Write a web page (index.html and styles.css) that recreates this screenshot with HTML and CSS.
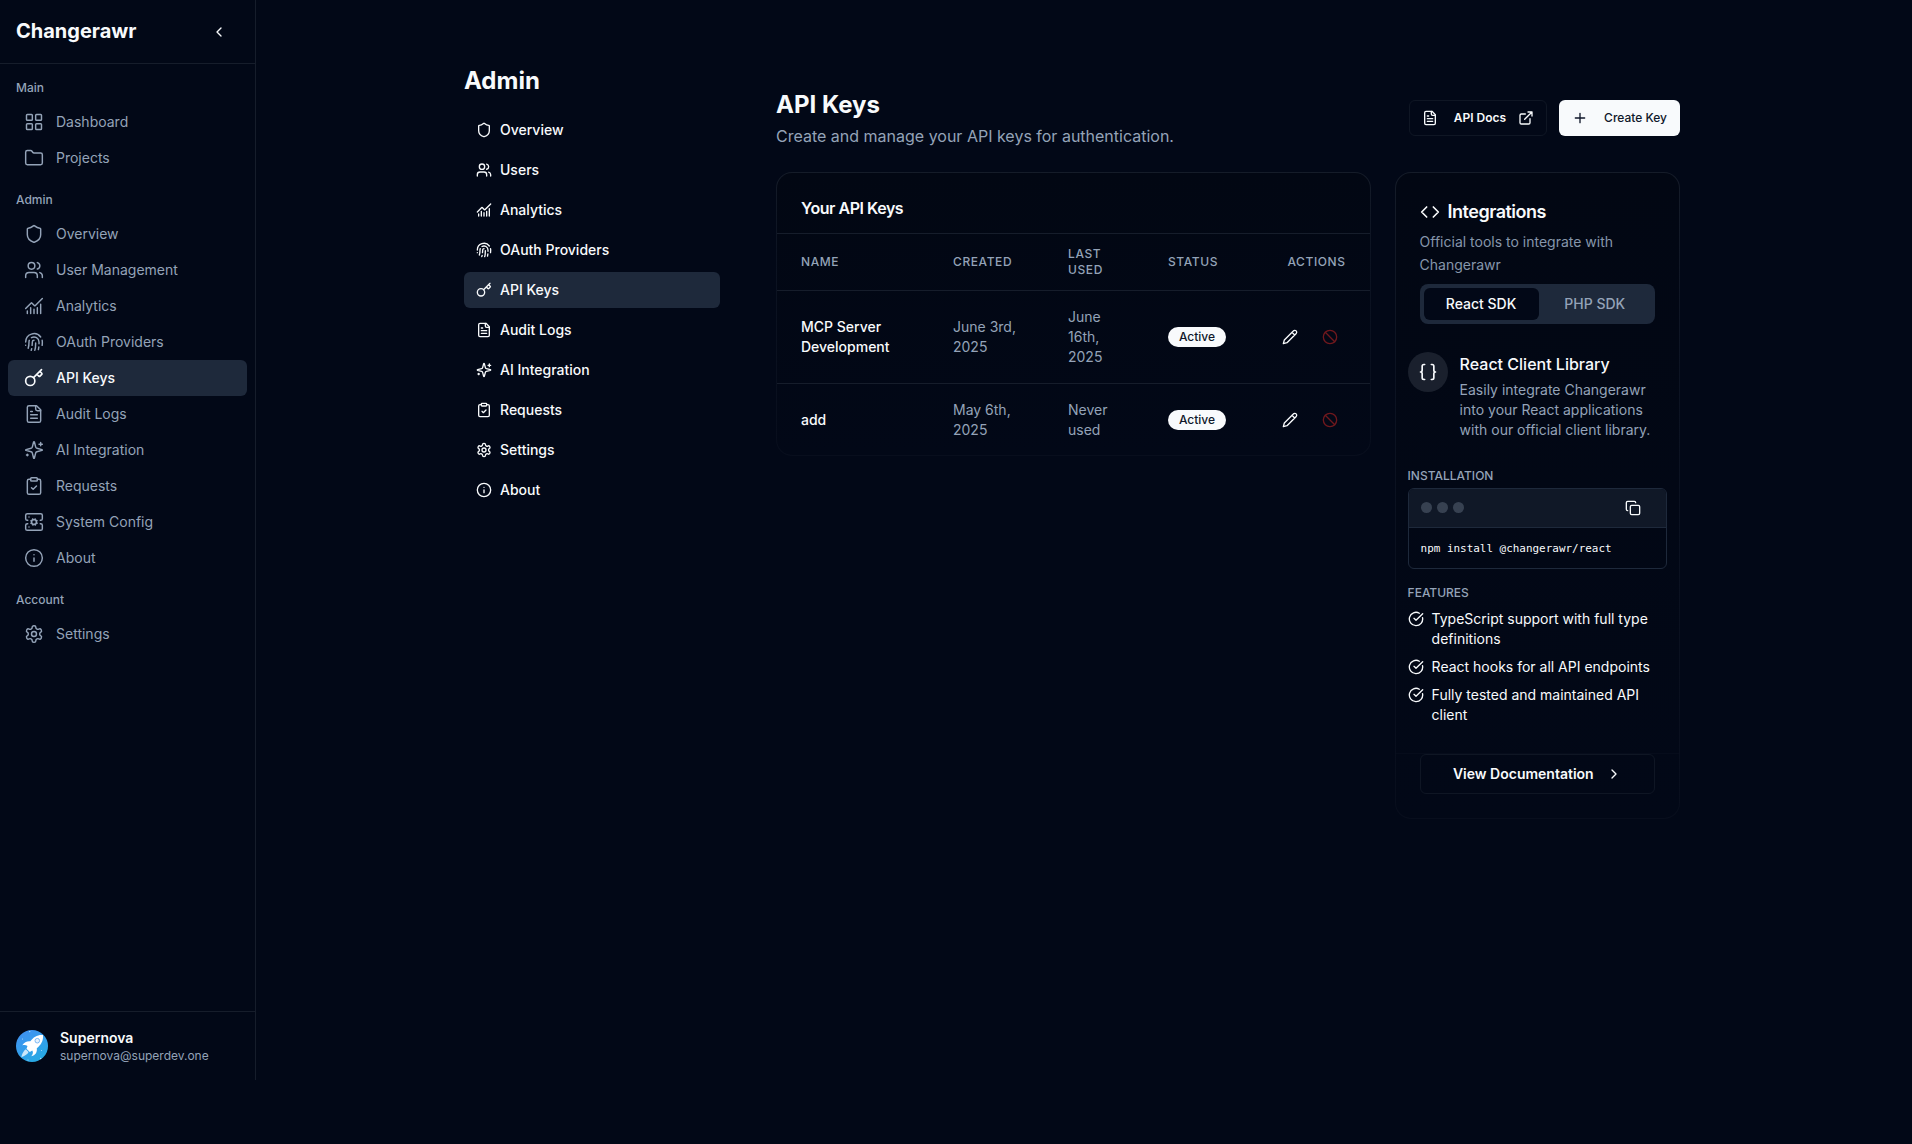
FILE: index.html
```html
<!DOCTYPE html>
<html lang="en">
<head>
<meta charset="utf-8">
<title>Changerawr - API Keys</title>
<link rel="stylesheet" href="styles.css">
</head>
<body>
<svg class="sprite" aria-hidden="true">
  <symbol id="grid" viewBox="0 0 24 24"><rect width="7" height="7" x="3" y="3" rx="1"/><rect width="7" height="7" x="14" y="3" rx="1"/><rect width="7" height="7" x="14" y="14" rx="1"/><rect width="7" height="7" x="3" y="14" rx="1"/></symbol>
  <symbol id="folder" viewBox="0 0 24 24"><path d="M20 20a2 2 0 0 0 2-2V8a2 2 0 0 0-2-2h-7.9a2 2 0 0 1-1.69-.9L9.6 3.9A2 2 0 0 0 7.93 3H4a2 2 0 0 0-2 2v13a2 2 0 0 0 2 2Z"/></symbol>
  <symbol id="shield" viewBox="0 0 24 24"><path d="M20 13c0 5-3.5 7.5-7.66 8.95a1 1 0 0 1-.67-.01C7.5 20.5 4 18 4 13V6a1 1 0 0 1 1-1c2 0 4.5-1.2 6.24-2.72a1.17 1.17 0 0 1 1.52 0C14.51 3.81 17 5 19 5a1 1 0 0 1 1 1z"/></symbol>
  <symbol id="users" viewBox="0 0 24 24"><path d="M16 21v-2a4 4 0 0 0-4-4H6a4 4 0 0 0-4 4v2"/><circle cx="9" cy="7" r="4"/><path d="M22 21v-2a4 4 0 0 0-3-3.87M16 3.13a4 4 0 0 1 0 7.75"/></symbol>
  <symbol id="chart" viewBox="0 0 24 24"><path d="M12 16v5M16 14v7M20 10v11M22 3l-8.646 8.646a.5.5 0 0 1-.708 0L9.354 8.354a.5.5 0 0 0-.707 0L2 15M4 18v3M8 14v7"/></symbol>
  <symbol id="fingerprint" viewBox="0 0 24 24"><path d="M12 10a2 2 0 0 0-2 2c0 1.02-.1 2.51-.26 4M14 13.12c0 2.38 0 6.38-1 8.88M17.29 21.02c.12-.6.43-2.3.5-3.02M2 12a10 10 0 0 1 18-6M2 16h.01M21.8 16c.2-2 .131-5.354 0-6M5 19.5C5.5 18 6 15 6 12a6 6 0 0 1 .34-2M8.65 22c.21-.66.45-1.32.57-2M9 6.8a6 6 0 0 1 9 5.2v2"/></symbol>
  <symbol id="key" viewBox="0 0 24 24"><path d="m15.5 7.5 2.3 2.3a1 1 0 0 0 1.4 0l2.1-2.1a1 1 0 0 0 0-1.4L19 4M21 2l-9.6 9.6"/><circle cx="7.5" cy="15.5" r="5.5"/></symbol>
  <symbol id="file" viewBox="0 0 24 24"><path d="M15 2H6a2 2 0 0 0-2 2v16a2 2 0 0 0 2 2h12a2 2 0 0 0 2-2V7Z"/><path d="M14 2v4a2 2 0 0 0 2 2h4M10 9H8M16 13H8M16 17H8"/></symbol>
  <symbol id="sparkles" viewBox="0 0 24 24"><path d="M9.937 15.5A2 2 0 0 0 8.5 14.063l-6.135-1.582a.5.5 0 0 1 0-.962L8.5 9.936A2 2 0 0 0 9.937 8.5l1.582-6.135a.5.5 0 0 1 .963 0L14.063 8.5A2 2 0 0 0 15.5 9.937l6.135 1.581a.5.5 0 0 1 0 .964L15.5 14.063a2 2 0 0 0-1.437 1.437l-1.582 6.135a.5.5 0 0 1-.963 0z"/><path d="M20 3v4M22 5h-4M4 17v2M5 18H3"/></symbol>
  <symbol id="clipboard" viewBox="0 0 24 24"><rect width="8" height="4" x="8" y="2" rx="1"/><path d="M16 4h2a2 2 0 0 1 2 2v14a2 2 0 0 1-2 2H6a2 2 0 0 1-2-2V6a2 2 0 0 1 2-2h2M9 14l2 2 4-4"/></symbol>
  <symbol id="server" viewBox="0 0 24 24"><circle cx="12" cy="12" r="3"/><path d="M4.5 10H4a2 2 0 0 1-2-2V4a2 2 0 0 1 2-2h16a2 2 0 0 1 2 2v4a2 2 0 0 1-2 2h-.5M4.5 14H4a2 2 0 0 0-2 2v4a2 2 0 0 0 2 2h16a2 2 0 0 0 2-2v-4a2 2 0 0 0-2-2h-.5M6 6h.01M6 18h.01M15.7 13.4l-.9-.3M9.2 10.9l-.9-.3M10.6 15.7l.3-.9M13.6 15.7l-.4-1M10.8 9.3l-.4-1M8.3 13.6l1-.4M14.7 10.8l1-.4M13.4 8.3l-.3.9"/></symbol>
  <symbol id="info" viewBox="0 0 24 24"><circle cx="12" cy="12" r="10"/><path d="M12 16v-4M12 8h.01"/></symbol>
  <symbol id="gear" viewBox="0 0 24 24"><path d="M12.22 2h-.44a2 2 0 0 0-2 2v.18a2 2 0 0 1-1 1.73l-.43.25a2 2 0 0 1-2 0l-.15-.08a2 2 0 0 0-2.73.73l-.22.38a2 2 0 0 0 .73 2.73l.15.1a2 2 0 0 1 1 1.72v.51a2 2 0 0 1-1 1.74l-.15.09a2 2 0 0 0-.73 2.73l.22.38a2 2 0 0 0 2.73.73l.15-.08a2 2 0 0 1 2 0l.43.25a2 2 0 0 1 1 1.73V20a2 2 0 0 0 2 2h.44a2 2 0 0 0 2-2v-.18a2 2 0 0 1 1-1.73l.43-.25a2 2 0 0 1 2 0l.15.08a2 2 0 0 0 2.73-.73l.22-.39a2 2 0 0 0-.73-2.73l-.15-.08a2 2 0 0 1-1-1.74v-.5a2 2 0 0 1 1-1.74l.15-.09a2 2 0 0 0 .73-2.73l-.22-.38a2 2 0 0 0-2.73-.73l-.15.08a2 2 0 0 1-2 0l-.43-.25a2 2 0 0 1-1-1.73V4a2 2 0 0 0-2-2z"/><circle cx="12" cy="12" r="3"/></symbol>
  <symbol id="external" viewBox="0 0 24 24"><path d="M15 3h6v6M10 14 21 3M18 13v6a2 2 0 0 1-2 2H5a2 2 0 0 1-2-2V8a2 2 0 0 1 2-2h6"/></symbol>
  <symbol id="plus" viewBox="0 0 24 24"><path d="M5 12h14M12 5v14"/></symbol>
  <symbol id="code" viewBox="0 0 24 24"><path d="m16 18 6-6-6-6M8 6l-6 6 6 6"/></symbol>
  <symbol id="braces" viewBox="0 0 24 24"><path d="M8 3H7a2 2 0 0 0-2 2v5a2 2 0 0 1-2 2 2 2 0 0 1 2 2v5c0 1.1.9 2 2 2h1M16 21h1a2 2 0 0 0 2-2v-5c0-1.1.9-2 2-2a2 2 0 0 1-2-2V5a2 2 0 0 0-2-2h-1"/></symbol>
  <symbol id="copy" viewBox="0 0 24 24"><rect width="14" height="14" x="8" y="8" rx="2"/><path d="M4 16c-1.1 0-2-.9-2-2V4c0-1.1.9-2 2-2h10c1.1 0 2 .9 2 2"/></symbol>
  <symbol id="check" viewBox="0 0 24 24"><path d="M21.801 10A10 10 0 1 1 17 3.335M9 11l3 3L22 4"/></symbol>
  <symbol id="pencil" viewBox="0 0 24 24"><path d="M17 3a2.850 2.830 0 1 1 4 4L7.500 20.500 2 22l1.500-5.500ZM15 5l4 4"/></symbol>
  <symbol id="ban" viewBox="0 0 24 24"><circle cx="12" cy="12" r="10"/><path d="m4.9 4.9 14.2 14.2"/></symbol>
  <symbol id="left" viewBox="0 0 24 24"><path d="m15 18-6-6 6-6"/></symbol>
  <symbol id="right" viewBox="0 0 24 24"><path d="m9 18 6-6-6-6"/></symbol>
</svg>
<div class="app">
  <aside class="sidebar">
    <header class="brand"><span>Changerawr</span><button class="collapse"><svg class="icon"><use href="#left"/></svg></button></header>
    <nav class="side-nav">
      <section><h3>Main</h3>
        <a class="side-link"><svg class="icon"><use href="#grid"/></svg>Dashboard</a>
        <a class="side-link"><svg class="icon"><use href="#folder"/></svg>Projects</a>
      </section>
      <section><h3>Admin</h3>
        <a class="side-link"><svg class="icon"><use href="#shield"/></svg>Overview</a>
        <a class="side-link"><svg class="icon"><use href="#users"/></svg>User Management</a>
        <a class="side-link"><svg class="icon"><use href="#chart"/></svg>Analytics</a>
        <a class="side-link"><svg class="icon"><use href="#fingerprint"/></svg>OAuth Providers</a>
        <a class="side-link active"><svg class="icon"><use href="#key"/></svg>API Keys</a>
        <a class="side-link"><svg class="icon"><use href="#file"/></svg>Audit Logs</a>
        <a class="side-link"><svg class="icon"><use href="#sparkles"/></svg>AI Integration</a>
        <a class="side-link"><svg class="icon"><use href="#clipboard"/></svg>Requests</a>
        <a class="side-link"><svg class="icon"><use href="#server"/></svg>System Config</a>
        <a class="side-link"><svg class="icon"><use href="#info"/></svg>About</a>
      </section>
      <section><h3>Account</h3>
        <a class="side-link"><svg class="icon"><use href="#gear"/></svg>Settings</a>
      </section>
    </nav>
    <footer class="user">
      <svg class="avatar" viewBox="0 0 32 32">
        <defs><linearGradient id="sky" x1="0" y1="0" x2="0.6" y2="1"><stop offset="0" stop-color="#438ff3"/><stop offset="1" stop-color="#27a9e4"/></linearGradient></defs>
        <circle cx="16" cy="16" r="16" fill="url(#sky)"/>
        <path fill="#fff" d="M27 5C21.500 4.500 17.500 7 14.300 11.300 11 11 8.300 12 6.300 15.300 8.500 14.800 10.200 15.100 11.500 16L10.500 18.800 13.800 22 16.300 20.600C17.200 22 17.300 23.800 15.300 26.200 19.500 25.400 21.300 22.300 20.800 18.300 25 14.800 27.500 11 27 5Z"/>
        <path fill="#fff" opacity=".75" d="M9.800 19.300 12.600 22C11.500 24.500 8.500 26 5.300 27.200 6 24 7.300 21 9.800 19.300Z"/>
        <circle cx="21.300" cy="10.700" r="2.300" fill="#e8f3fe" stroke="#62abf2" stroke-width=".8"/>
        <g fill="#b9e2fb"><circle cx="13.700" cy="1.600" r=".7"/><circle cx="6.500" cy="9" r=".5"/><circle cx="25.500" cy="20.500" r=".5"/><circle cx="24.700" cy="28.500" r=".7"/><circle cx="12" cy="30" r=".6"/></g>
      </svg>
      <div class="who"><strong>Supernova</strong><span>supernova@superdev.one</span></div>
    </footer>
  </aside>

  <div class="page">
    <aside class="admin">
      <h2>Admin</h2>
      <nav class="admin-nav">
        <a class="admin-link"><svg class="icon"><use href="#shield"/></svg>Overview</a>
        <a class="admin-link"><svg class="icon"><use href="#users"/></svg>Users</a>
        <a class="admin-link"><svg class="icon"><use href="#chart"/></svg>Analytics</a>
        <a class="admin-link"><svg class="icon"><use href="#fingerprint"/></svg>OAuth Providers</a>
        <a class="admin-link active"><svg class="icon"><use href="#key"/></svg>API Keys</a>
        <a class="admin-link"><svg class="icon"><use href="#file"/></svg>Audit Logs</a>
        <a class="admin-link"><svg class="icon"><use href="#sparkles"/></svg>AI Integration</a>
        <a class="admin-link"><svg class="icon"><use href="#clipboard"/></svg>Requests</a>
        <a class="admin-link"><svg class="icon"><use href="#gear"/></svg>Settings</a>
        <a class="admin-link"><svg class="icon"><use href="#info"/></svg>About</a>
      </nav>
    </aside>

    <main class="content">
      <header class="head">
        <div><h1>API Keys</h1><p>Create and manage your API keys for authentication.</p></div>
        <div class="head-actions">
          <button class="btn outline docs"><svg class="icon"><use href="#file"/></svg><span>API Docs</span><svg class="icon"><use href="#external"/></svg></button>
          <button class="btn primary"><svg class="icon"><use href="#plus"/></svg><span>Create Key</span></button>
        </div>
      </header>
      <div class="columns">
        <section class="card keys">
          <h3>Your API Keys</h3>
          <table>
            <colgroup><col class="c-name"><col class="c-created"><col class="c-used"><col class="c-status"><col class="c-actions"></colgroup>
            <thead><tr><th>Name</th><th>Created</th><th>Last Used</th><th>Status</th><th class="end">Actions</th></tr></thead>
            <tbody>
              <tr><td class="name">MCP Server Development</td><td>June 3rd, 2025</td><td>June 16th, 2025</td><td><span class="badge">Active</span></td><td><div class="row-actions"><button class="mini"><svg class="icon"><use href="#pencil"/></svg></button><button class="mini danger"><svg class="icon"><use href="#ban"/></svg></button></div></td></tr>
              <tr><td class="name">add</td><td>May 6th, 2025</td><td>Never used</td><td><span class="badge">Active</span></td><td><div class="row-actions"><button class="mini"><svg class="icon"><use href="#pencil"/></svg></button><button class="mini danger"><svg class="icon"><use href="#ban"/></svg></button></div></td></tr>
            </tbody>
          </table>
        </section>

        <section class="card sdk">
          <div class="sdk-head">
            <h3><svg class="icon"><use href="#code"/></svg>Integrations</h3>
            <p>Official tools to integrate with Changerawr</p>
            <div class="tabs"><button class="tab on">React SDK</button><button class="tab">PHP SDK</button></div>
          </div>
          <div class="sdk-body">
            <div class="lib">
              <div class="lib-icon"><svg class="icon"><use href="#braces"/></svg></div>
              <div><h4>React Client Library</h4><p>Easily integrate Changerawr into your React applications with our official client library.</p></div>
            </div>
            <h5>INSTALLATION</h5>
            <div class="terminal">
              <div class="term-bar"><div class="dots"><i></i><i></i><i></i></div><svg class="icon"><use href="#copy"/></svg></div>
              <code>npm install @changerawr/react</code>
            </div>
            <h5 class="feat-title">FEATURES</h5>
            <ul>
              <li><svg class="icon"><use href="#check"/></svg><span>TypeScript support with full type definitions</span></li>
              <li><svg class="icon"><use href="#check"/></svg><span>React hooks for all API endpoints</span></li>
              <li><svg class="icon"><use href="#check"/></svg><span>Fully tested and maintained API client</span></li>
            </ul>
          </div>
          <div class="sdk-foot"><button class="btn outline wide"><span>View Documentation</span><svg class="icon"><use href="#right"/></svg></button></div>
        </section>
      </div>
    </main>
  </div>
</div>
</body>
</html>
```
FILE: styles.css
```css
:root {
  --bg: #020817;
  --fg: #f8fafc;
  --muted: #94a3b8;
  --soft: #8696ab;
  --accent: #1e293b;
  --line: #161d2b;
  --faint: #0f1624;
}
* { box-sizing: border-box; }
body {
  margin: 0;
  height: 1144px;
  overflow: hidden;
  background: var(--bg);
  color: var(--fg);
  font: 400 14px/20px Inter, "Liberation Sans", sans-serif;
}
h1, h2, h3, h4, h5, p, ul { margin: 0; padding: 0; }
button { font: inherit; color: inherit; background: none; border: 0; padding: 0; }
.sprite { display: none; }
.icon {
  display: block;
  flex: none;
  width: 16px;
  height: 16px;
  fill: none;
  stroke: currentColor;
  stroke-width: 2;
  stroke-linecap: round;
  stroke-linejoin: round;
}
.app { display: flex; align-items: flex-start; }

/* Primary sidebar */
.sidebar {
  display: flex;
  flex-direction: column;
  flex: none;
  width: 256px;
  height: 1080px;
  border-right: 1px solid var(--line);
}
.brand {
  display: flex;
  align-items: center;
  justify-content: space-between;
  height: 64px;
  padding: 0 16px;
  border-bottom: 1px solid var(--line);
  font-size: 20px;
  font-weight: 700;
  line-height: 28px;
}
.brand span { padding-bottom: 2px; }
.collapse { display: grid; place-items: center; width: 40px; height: 40px; }
.side-nav { display: flex; flex: 1; flex-direction: column; gap: 16px; padding: 16px 8px; }
.side-nav h3 {
  margin-bottom: 8px;
  padding: 0 8px;
  color: var(--muted);
  font-size: 12px;
  font-weight: 500;
  line-height: 16px;
}
.side-link {
  display: flex;
  align-items: center;
  gap: 12px;
  height: 36px;
  padding: 0 16px;
  border-radius: 6px;
  color: var(--muted);
}
.side-link .icon { width: 20px; height: 20px; stroke-width: 1.75; }
.side-link.active { background: var(--accent); color: var(--fg); font-weight: 500; }
.side-link.active .icon { stroke-width: 2; }
.user {
  display: flex;
  align-items: center;
  gap: 12px;
  padding: 16px;
  border-top: 1px solid var(--line);
}
.avatar { width: 32px; height: 32px; }
.who { display: flex; flex-direction: column; }
.who strong { font-weight: 600; }
.who span { color: var(--muted); font-size: 12px; line-height: 16px; }

/* Page */
.page { display: flex; gap: 56px; width: 1424px; padding: 64px 0 0 208px; }
.admin { flex: none; width: 256px; }
.admin h2 { padding-top: 1px; margin-bottom: 15px; font-size: 24px; font-weight: 700; line-height: 32px; }
.admin-nav { display: flex; flex-direction: column; gap: 4px; }
.admin-link {
  display: flex;
  align-items: center;
  gap: 8px;
  height: 36px;
  padding: 0 12px;
  border-radius: 6px;
  font-weight: 500;
}
.admin-link.active { background: var(--accent); }
.content { flex: 1; padding-top: 24px; }
.head { display: flex; align-items: center; justify-content: space-between; margin-bottom: 24px; }
.head h1 { padding-top: 1px; margin-bottom: 3px; font-size: 24px; font-weight: 700; line-height: 32px; }
.head p { color: var(--muted); font-size: 16px; line-height: 24px; }
.head-actions { display: flex; gap: 12px; }
.btn {
  display: flex;
  align-items: center;
  gap: 16px;
  height: 36px;
  padding: 0 12px;
  border-radius: 6px;
  font-size: 12px;
  font-weight: 500;
  white-space: nowrap;
}
.btn.outline { border: 1px solid var(--faint); font-weight: 600; }
.btn.docs .icon:last-child { margin-left: -4px; }
.btn.primary { padding: 0 13px; background: var(--fg); color: #0f172a; }

.columns { display: grid; grid-template-columns: 594.6px 285.4px; gap: 24px; align-items: start; }
.card {
  border: 1px solid transparent;
  border-radius: 16px;
  background:
    linear-gradient(#020713, #020817) padding-box,
    linear-gradient(#151c29, #0c1322 30%, #080e1d) border-box;
}

/* Keys table */
.keys { overflow: hidden; }
.keys h3 {
  padding: 23px 24px 13px;
  border-bottom: 1px solid var(--line);
  font-size: 16px;
  font-weight: 600;
  line-height: 24px;
  letter-spacing: -.46px;
}
table { width: 100%; table-layout: fixed; border-collapse: separate; border-spacing: 0; }
.c-name { width: 152px; }
.c-created { width: 115px; }
.c-used { width: 100px; }
.c-status { width: 105px; }
th, td { padding: 16px 24px; text-align: left; color: var(--muted); }
th {
  padding-top: 12px;
  padding-bottom: 12px;
  border-bottom: 1px solid var(--line);
  font-size: 12px;
  font-weight: 500;
  line-height: 16px;
  letter-spacing: .6px;
  text-transform: uppercase;
}
th.end { text-align: right; }
td { font-weight: 400; }
tbody tr:first-child td { border-bottom: 1px solid var(--line); }
tbody tr:last-child td { padding-bottom: 15px; }
td.name { color: var(--fg); font-weight: 500; padding-right: 20px; }
.badge {
  display: block;
  width: 58px;
  height: 20px;
  border-radius: 10px;
  background: var(--fg);
  color: #0f172a;
  font-size: 12px;
  font-weight: 500;
  line-height: 20px;
  text-align: center;
}
.row-actions { display: flex; gap: 8px; justify-content: flex-end; color: var(--fg); }
.mini { display: grid; flex: none; place-items: center; width: 32px; height: 32px; }
.danger { color: #6f181d; }

/* Integrations card */
.sdk-head { padding: 25px 24px 0; }
.sdk-head h3 {
  display: flex;
  align-items: center;
  gap: 8px;
  font-size: 18px;
  font-weight: 600;
  line-height: 28px;
  letter-spacing: -.5px;
}
.sdk-head h3 .icon { width: 20px; height: 20px; }
.sdk-head p { margin-top: 5px; color: var(--soft); line-height: 22.75px; }
.tabs {
  display: grid;
  grid-template-columns: 115px 1fr;
  height: 40px;
  margin-top: 7px;
  padding: 4px;
  border-radius: 8px;
  background: var(--accent);
  color: var(--muted);
  font-weight: 500;
}
.tab { border-radius: 6px; }
.tab.on { background: var(--bg); color: var(--fg); }
.sdk-body { padding: 28px 12px 0; }
.lib { display: flex; align-items: flex-start; gap: 12px; }
.lib-icon {
  display: grid;
  flex: none;
  place-items: center;
  width: 40px;
  height: 40px;
  border-radius: 50%;
  background: #1a202d;
}
.lib-icon .icon { width: 20px; height: 20px; }
.lib h4 { font-size: 16px; font-weight: 500; line-height: 24px; }
.lib p { margin-top: 4px; color: var(--muted); }
h5 { margin-top: 28px; color: var(--muted); font-size: 12px; font-weight: 500; line-height: 16px; }
.terminal { margin-top: 4px; border: 1px solid var(--accent); border-radius: 6px; overflow: hidden; }
.term-bar {
  display: flex;
  align-items: center;
  justify-content: space-between;
  height: 39px;
  padding: 0 25px 0 12px;
  border-bottom: 1px solid var(--accent);
  background: #101827;
}
.dots { display: flex; gap: 5px; }
.dots i { width: 11px; height: 11px; border-radius: 50%; background: #374151; }
code {
  display: block;
  height: 40px;
  padding-left: 12px;
  font: 400 10.95px/41px "DejaVu Sans Mono", monospace;
}
h5.feat-title { margin-top: 16px; }
ul { display: flex; flex-direction: column; gap: 8px; margin-top: 8px; list-style: none; }
li { display: flex; align-items: flex-start; gap: 8px; }
li .icon { margin-top: 2px; }
.sdk-foot { margin-top: 28px; padding: 0 24px 24px; border-top: 1px solid #060c1b; }
.btn.wide { justify-content: center; gap: 12px; width: 100%; height: 40px; font-size: 14px; }
```
